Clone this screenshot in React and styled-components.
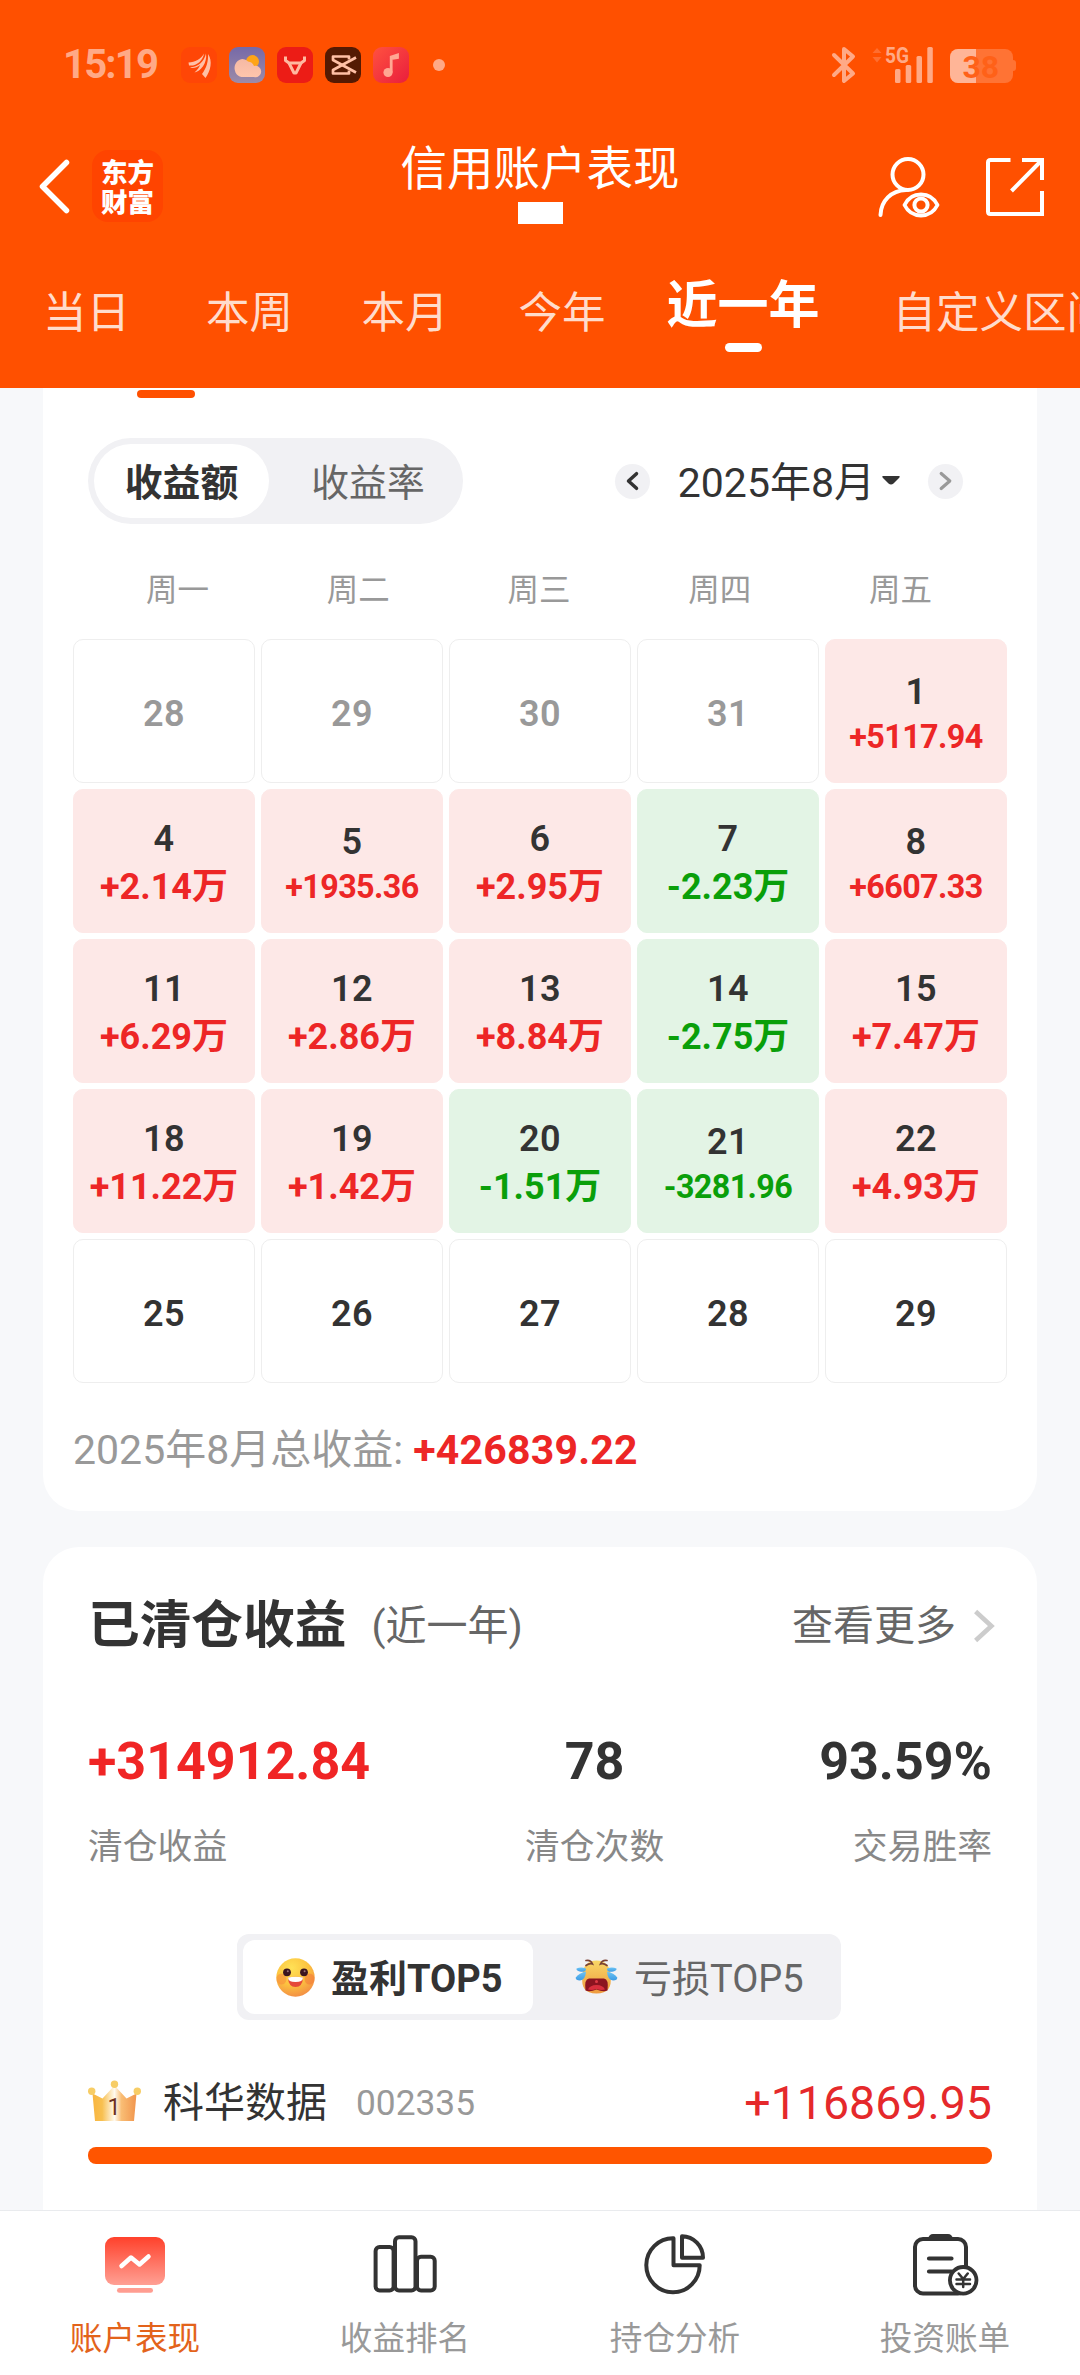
import React from "react";
import styled, { createGlobalStyle } from "styled-components";

const ORANGE = "#ff5000";
const FADED = "#ffa986";

const GlobalStyle = createGlobalStyle`
  * { box-sizing: border-box; }
  body {
    margin: 0;
    background: #f7f8fa;
    font-family: Roboto, "Noto Sans CJK SC", sans-serif;
    color: #333;
  }
  svg { display: block; flex: none; overflow: visible; }
`;

const Page = styled.div`
  width: 1080px;
  height: 2375px;
  display: flex;
  flex-direction: column;
  overflow: hidden;
  background: #f7f8fa;
`;

/* ---------- header ---------- */

const Header = styled.header`
  height: 388px;
  flex: none;
  background: ${ORANGE};
  color: #fff;
`;

const StatusBar = styled.div`
  height: 130px;
  display: flex;
  align-items: center;
  justify-content: space-between;
  padding: 0 64px 0 63px;
`;

const StatusGroup = styled.div`
  display: flex;
  align-items: center;
`;

const Clock = styled.span`
  width: 118px;
  font-size: 40px;
  font-weight: 700;
  line-height: 48px;
  letter-spacing: -1.8px;
  color: ${FADED};
`;

const AppIcons = styled.div`
  display: flex;
  gap: 12px;
`;

const MoreDot = styled.span`
  width: 12px;
  height: 12px;
  margin-left: 24px;
  border-radius: 50%;
  background: ${FADED};
`;

const SignalSlot = styled.span`
  margin: 0 14px 0 16px;
`;

const NavBar = styled.div`
  height: 112px;
  display: grid;
  grid-template-columns: 1fr auto 1fr;
  align-items: center;
  padding: 0 36px 0 36px;
`;

const NavLeft = styled.div`
  display: flex;
  align-items: center;
  gap: 21px;
  padding-left: 2px;
`;

const NavRight = styled.div`
  display: flex;
  align-items: center;
  justify-content: flex-end;
  gap: 44px;
  padding-top: 1px;
`;

const Logo = styled.div`
  width: 71px;
  height: 72px;
  padding: 6px 8px 0 9px;
  border-radius: 16px;
  background: #ff4400;
  font-family: "Noto Sans CJK SC", sans-serif;
  font-size: 26.5px;
  font-weight: 900;
  line-height: 30px;
`;

const TitleBlock = styled.div`
  display: flex;
  flex-direction: column;
  align-items: center;
  padding-bottom: 5px;
`;

const Title = styled.h1`
  margin: 0 0 8px;
  font-size: 46.5px;
  font-weight: 400;
  line-height: 50px;
`;

const MaskedAccount = styled.span`
  width: 45px;
  height: 22px;
  background: #fff;
`;

const PeriodTabs = styled.nav`
  height: 146px;
  display: flex;
  align-items: flex-start;
  padding-left: 43px;
  overflow: hidden;
`;

const PeriodTab = styled.span`
  flex: none;
  display: flex;
  flex-direction: column;
  align-items: center;
  margin-top: ${(p) => (p.$active ? 34 : 42)}px;
  margin-right: ${(p) => p.$space}px;
  font-size: ${(p) => (p.$active ? 51 : 43.5)}px;
  font-weight: ${(p) => (p.$active ? 700 : 400)};
  line-height: 60px;
  white-space: nowrap;
  color: ${(p) => (p.$active ? "#fff" : "#ffdccc")};
`;

const TabMark = styled.i`
  width: 37px;
  height: 9px;
  margin-top: 7px;
  border-radius: 5px;
  background: #fff;
`;

/* ---------- shared ---------- */

const Content = styled.main`
  flex: 1;
  min-height: 0;
  overflow: hidden;
  padding: 0 43px;
  display: flex;
  flex-direction: column;
  gap: 36px;
`;

const Card = styled.section`
  flex: none;
  background: #fff;
  padding: ${(p) => p.$padding};
  border-radius: ${(p) => p.$radius};
`;

const Row = styled.div`
  display: flex;
  align-items: center;
  justify-content: space-between;
`;

/* ---------- calendar card ---------- */

const SectionMark = styled.div`
  width: 58px;
  height: 8px;
  margin: 0 0 40px 49px;
  border-radius: 4px;
  background: ${ORANGE};
`;

const Pill = styled.div`
  display: flex;
  width: 375px;
  height: 86px;
  padding: 6px;
  border-radius: 43px;
  background: #f1f1f4;
`;

const PillOption = styled.span`
  flex: none;
  width: ${(p) => (p.$active ? 175 : 198)}px;
  padding-top: 2px;
  border-radius: 37px;
  text-align: center;
  font-size: 37.8px;
  line-height: 74px;
  font-weight: ${(p) => (p.$active ? 700 : 400)};
  color: ${(p) => (p.$active ? "#333" : "#666")};
  background: ${(p) => (p.$active ? "#fff" : "transparent")};
`;

const MonthPicker = styled.div`
  display: flex;
  align-items: center;
  margin-right: 29px;
`;

const RoundButton = styled.span`
  width: 35px;
  height: 35px;
  border-radius: 50%;
  background: #f1f1f4;
  display: flex;
  align-items: center;
  justify-content: center;
`;

const MonthLabel = styled.span`
  display: flex;
  align-items: center;
  gap: 7px;
  margin: 0 28px;
  font-size: 41px;
  line-height: 50px;
`;

const MonthText = styled.span`
  padding-top: 3px;
`;

const Weekdays = styled.div`
  display: grid;
  grid-template-columns: repeat(5, 1fr);
  margin: 47px 1px 0 -1px;
  text-align: center;
  font-size: 31.5px;
  font-weight: 400;
  line-height: 40px;
  color: #999;
`;

const Calendar = styled.div`
  display: grid;
  grid-template-columns: repeat(5, 182px);
  grid-auto-rows: 144px;
  gap: 6px;
  margin: 28px -15px 0;
`;

const tones = {
  up: { back: "#fde8e7", edge: "#fde8e7", text: "#ed2626" },
  down: { back: "#e3f4e5", edge: "#e3f4e5", text: "#0a9f0a" },
  none: { back: "#fff", edge: "#eeeeee", text: "#333" },
};

const DayCell = styled.div`
  display: flex;
  flex-direction: column;
  align-items: center;
  justify-content: center;
  padding-top: 5px;
  border-radius: 10px;
  border: 1px solid ${(p) => tones[p.$tone].edge};
  background: ${(p) => tones[p.$tone].back};
  font-weight: 700;
`;

const DayNumber = styled.span`
  font-size: 36px;
  font-weight: 600;
  line-height: 48px;
  letter-spacing: 0.4px;
  color: ${(p) => (p.$muted ? "#999" : "#333")};
`;

const DayAmount = styled.span`
  font-size: ${(p) => (p.$small ? 32.3 : 36)}px;
  line-height: ${(p) => (p.$small ? 43 : 49)}px;
  letter-spacing: ${(p) => (p.$small ? -0.6 : 0)}px;
  color: ${(p) => tones[p.$tone].text};
`;

const MonthTotal = styled.div`
  margin: 42px -15px 0;
  font-size: 41px;
  font-weight: 400;
  line-height: 50px;
  color: #999;
`;

const TotalAmount = styled.b`
  font-weight: 700;
  letter-spacing: 0.2px;
  color: #ed2626;
`;

/* ---------- closed positions card ---------- */

const CardTitle = styled.h2`
  margin: 0;
  font-size: 51.7px;
  font-weight: 700;
  line-height: 60px;
`;

const TitleNote = styled.span`
  flex: 1;
  margin-left: 25px;
  font-size: 41px;
  font-weight: 400;
  line-height: 60px;
  color: #666;
`;

const MoreLink = styled.span`
  display: flex;
  align-items: center;
  gap: 15px;
  margin-right: -4px;
  font-size: 41px;
  font-weight: 400;
  line-height: 60px;
  color: #666;
`;

const Stats = styled(Row)`
  margin-top: 76px;
`;

const Stat = styled.div`
  display: flex;
  flex-direction: column;
  align-items: ${(p) => p.$align};
`;

const StatValue = styled.span`
  font-size: 52px;
  font-weight: 700;
  line-height: 60px;
  color: ${(p) => (p.$up ? "#f02525" : "#333")};
`;

const StatLabel = styled.span`
  margin-top: 35px;
  font-size: 34.8px;
  font-weight: 400;
  line-height: 40px;
  color: #888;
`;

const RankSwitch = styled.div`
  display: flex;
  width: 604px;
  height: 86px;
  margin: 67px 0 0 149px;
  padding: 6px;
  border-radius: 12px;
  background: #f1f1f4;
`;

const RankOption = styled.span`
  width: ${(p) => (p.$active ? 290 : 302)}px;
  padding-left: ${(p) => (p.$active ? 33 : 42)}px;
  display: flex;
  align-items: center;
  gap: 16px;
  border-radius: 12px;
  font-size: 38px;
  line-height: 72px;
  font-weight: ${(p) => (p.$active ? 700 : 400)};
  color: ${(p) => (p.$active ? "#333" : "#666")};
  background: ${(p) => (p.$active ? "#fff" : "transparent")};
`;

const RankText = styled.span`
  padding-top: 3px;
`;

const StockRow = styled.div`
  display: flex;
  align-items: center;
  margin-top: 53px;
  line-height: 60px;
`;

const CrownSlot = styled.span`
  padding-bottom: 4px;
`;

const StockName = styled.span`
  margin-left: 22px;
  font-size: 41px;
`;

const StockCode = styled.span`
  flex: 1;
  margin-left: 29px;
  font-size: 35.3px;
  color: #999;
`;

const StockGain = styled.span`
  font-size: 46.5px;
  color: #e5292b;
`;

const GainBar = styled.div`
  height: 17px;
  margin-top: 14px;
  border-radius: 8px;
  background: #ff5500;
`;

/* ---------- bottom navigation ---------- */

const BottomNav = styled.nav`
  flex: none;
  height: 165px;
  display: grid;
  grid-template-columns: repeat(4, 1fr);
  border-top: 1px solid #e9ebee;
  background: #fff;
`;

const NavItem = styled.div`
  display: flex;
  flex-direction: column;
  align-items: center;
  gap: 23px;
  padding-top: 21px;
  font-size: 32.6px;
  font-weight: 400;
  line-height: 40px;
  color: ${(p) => (p.$active ? "#e3631b" : "#999")};
`;

/* ---------- drawings ---------- */

const WingIcon = () => (
  <svg width="36" height="36" viewBox="0 0 36 36">
    <rect width="36" height="36" rx="9" fill="#ff4606" />
    <g fill="#ffc0a6">
      <path d="M7.5 15.5C14 15 20 12 23 6.5C22 14 15 19.5 8 18.5Z" />
      <path d="M9 20.5C17 20 23 15 25 6.500C26.500 16 19.500 24.500 13.500 25.500C17 22 18.500 20 19 18C16 20.500 12 22 9 20.5Z" />
      <path d="M27 7C32 14 29.500 24 24.500 31L21 27C25.500 21 27.500 14 27 7Z" />
    </g>
  </svg>
);

const WeatherIcon = () => (
  <svg width="36" height="36" viewBox="0 0 36 36">
    <defs>
      <linearGradient id="sky" x1="0" y1="0" x2="0" y2="1">
        <stop offset="0" stopColor="#7569a8" />
        <stop offset="1" stopColor="#9d8ba8" />
      </linearGradient>
      <linearGradient id="cloud" x1="0" y1="0" x2="0" y2="1">
        <stop offset="0" stopColor="#f5b9a4" />
        <stop offset="1" stopColor="#ffc5ac" />
      </linearGradient>
    </defs>
    <rect width="36" height="36" rx="9" fill="url(#sky)" />
    <circle cx="23.5" cy="14.500" r="6.500" fill="#ffa417" />
    <path d="M12.500 30A8 9 0 1 1 19 14.500A7 7 0 0 1 25 19A5.700 5.700 0 1 1 25 30Z" fill="url(#cloud)" />
  </svg>
);

const BullIcon = () => (
  <svg width="36" height="36" viewBox="0 0 36 36">
    <rect width="36" height="36" rx="9" fill="#ec1c16" />
    <g fill="none" stroke="#ffb8a0" strokeWidth="3" strokeLinejoin="round">
      <path d="M8.500 9.500V13.500L12 16H24L27.500 13.500V9.500" />
      <path d="M12 16L17 26H19L24 16" />
    </g>
  </svg>
);

const CutIcon = () => (
  <svg width="36" height="36" viewBox="0 0 36 36">
    <rect width="36" height="36" rx="9" fill="#551a03" />
    <g fill="none" stroke="#ffc0a6" strokeWidth="2.700" strokeLinejoin="round">
      <path d="M31 10.500L8 23V26.500H24V23.500" />
      <path d="M31 25.500L8 13V9.500H24V12.500" />
    </g>
  </svg>
);

const MusicIcon = () => (
  <svg width="36" height="36" viewBox="0 0 36 36">
    <defs>
      <linearGradient id="music" x1="0" y1="0" x2="1" y2="1">
        <stop offset="0" stopColor="#ff5140" />
        <stop offset="1" stopColor="#e91e3c" />
      </linearGradient>
    </defs>
    <rect width="36" height="36" rx="9" fill="url(#music)" />
    <circle cx="15" cy="25.500" r="4.600" fill="#ffa793" />
    <path d="M18.200 25.500V10L24.500 8V10.500L19.500 11.500" fill="none" stroke="#ffa793" strokeWidth="2.800" />
  </svg>
);

const BluetoothIcon = () => (
  <svg width="24" height="40" viewBox="0 0 24 40">
    <path d="M2 10L21 28.500L12 36V4L21 11.500L2 30" fill="none" stroke={FADED} strokeWidth="4" strokeLinejoin="round" strokeLinecap="round" />
  </svg>
);

const SignalIcon = () => (
  <svg width="64" height="40" viewBox="0 0 64 40">
    <path d="M0.500 8L5 3L9.500 8ZM0.500 12L5 17.500L9.500 12Z" fill="#ff6e2f" />
    <text x="13" y="17.500" fontFamily="Roboto, sans-serif" fontSize="22" fontWeight="700" textLength="24" lengthAdjust="spacingAndGlyphs" fill={FADED}>5G</text>
    <g fill={FADED}>
      <rect x="23" y="24" width="5.500" height="14" rx="1.500" />
      <rect x="33.700" y="20" width="5.500" height="18" rx="1.500" />
      <rect x="44.500" y="11" width="5.500" height="27" rx="1.500" />
      <rect x="55.300" y="2" width="5.500" height="36" rx="1.500" />
    </g>
  </svg>
);

const BatteryIcon = () => (
  <svg width="66" height="40" viewBox="0 0 66 40">
    <defs>
      <clipPath id="cell"><rect y="4" width="63" height="34" rx="8" /></clipPath>
    </defs>
    <path d="M63 15a3 3 0 0 1 3 3v5a3 3 0 0 1-3 3Z" fill="#ff7334" />
    <g clipPath="url(#cell)">
      <rect y="4" width="63" height="34" fill="#ff7334" />
      <rect y="4" width="26" height="34" fill="#ffb597" />
    </g>
    <text x="12.500" y="33" fontFamily="Roboto, sans-serif" fontSize="32" fontWeight="700" fill="#ff6118">38</text>
  </svg>
);

const BackIcon = () => (
  <svg width="33" height="56" viewBox="0 0 33 56">
    <path d="M28.500 4.500L4.500 28.500L28.500 52.500" fill="none" stroke="#fff" strokeWidth="5.500" strokeLinecap="round" strokeLinejoin="round" />
  </svg>
);

const PersonViewIcon = () => (
  <svg width="64" height="64" viewBox="0 0 64 64">
    <g fill="none" stroke="#fff" strokeWidth="4" strokeLinecap="round">
      <circle cx="30" cy="19.500" r="15.500" />
      <path d="M2.500 60C3 46 13 35.500 28 35" />
      <path d="M26.500 50C30 43 36 39.500 43 39.500C50 39.500 56 43 59.500 50C56 57 50 60.500 43 60.500C36 60.500 30 57 26.500 50Z" strokeLinejoin="round" strokeWidth="3.800" />
      <circle cx="43" cy="50" r="6.600" />
    </g>
  </svg>
);

const ShareIcon = () => (
  <svg width="58" height="58" viewBox="0 0 58 58">
    <path d="M24.500 2H4.500Q2 2 2 4.500V53.500Q2 56 4.500 56H56V33" fill="none" stroke="#fff" strokeWidth="4" />
    <path d="M36 2H56V22M56 2L25.500 33" fill="none" stroke="#fff" strokeWidth="4" />
  </svg>
);

const Chevron = ({ width, height, thick, color, flip, round }) => (
  <svg width={width} height={height} viewBox={`0 0 ${width} ${height}`}>
    <path
      d={
        flip
          ? `M${width - thick} ${thick / 1.3}L${thick} ${height / 2}L${width - thick} ${height - thick / 1.3}`
          : `M${thick} ${thick / 1.3}L${width - thick} ${height / 2}L${thick} ${height - thick / 1.3}`
      }
      fill="none"
      stroke={color}
      strokeWidth={thick}
      strokeLinecap={round ? "round" : "butt"}
      strokeLinejoin={round ? "round" : "miter"}
    />
  </svg>
);

const CaretIcon = () => (
  <svg width="18" height="12" viewBox="0 0 18 12">
    <path d="M1 1H17Q18.500 1.200 17 3L11.500 8.500Q9 10.500 6.500 8.500L1 3Q-0.500 1.200 1 1Z" fill="#333" />
  </svg>
);

const HappyIcon = () => (
  <svg width="39" height="39" viewBox="0 0 39 39">
    <defs>
      <radialGradient id="happy" cx="0.4" cy="0.25" r="0.8">
        <stop offset="0" stopColor="#ffe156" />
        <stop offset="0.55" stopColor="#fcc23f" />
        <stop offset="1" stopColor="#f28a45" />
      </radialGradient>
    </defs>
    <circle cx="19.500" cy="19.500" r="19.200" fill="url(#happy)" />
    <ellipse cx="5.500" cy="21" rx="5" ry="5.500" fill="#f8893c" opacity="0.55" />
    <ellipse cx="33.500" cy="21" rx="5" ry="5.500" fill="#f2763a" opacity="0.55" />
    <circle cx="11" cy="14.300" r="3.900" fill="#3b1420" />
    <circle cx="28" cy="14.300" r="3.900" fill="#3b1420" />
    <circle cx="11.800" cy="13.300" r="1" fill="#9a7078" />
    <circle cx="28.600" cy="13.300" r="1" fill="#9a7078" />
    <path d="M12 19.500Q19.500 18 27 19.500Q26.500 29 19.500 29Q12.500 29 12 19.500Z" fill="#e5493a" />
    <path d="M12 19.500Q19.500 18 27 19.500Q27 24 19.500 24Q12 24 12 19.500Z" fill="#fff" />
  </svg>
);

const CryIcon = () => (
  <svg width="43" height="36" viewBox="0 0 43 36">
    <defs>
      <linearGradient id="cry" x1="0" y1="0" x2="0" y2="1">
        <stop offset="0" stopColor="#f9d767" />
        <stop offset="1" stopColor="#ee9a3d" />
      </linearGradient>
      <linearGradient id="tear" x1="0" y1="0" x2="0" y2="1">
        <stop offset="0" stopColor="#6ec5f5" />
        <stop offset="1" stopColor="#3d9be4" />
      </linearGradient>
    </defs>
    <path d="M7.500 18C7 7 13 1.500 21.500 1.500S36 7 35.500 18C37 28 33 34.500 21.500 34.500S6 28 7.500 18Z" fill="url(#cry)" />
    <path d="M10.500 31.500Q9 20 14 19.500H29Q34 20 32.500 31.500Q28 33.500 21.500 30.500Q15 33.500 10.500 31.500Z" fill="#8c1420" />
    <path d="M13 30.500Q15 26 21.500 26T30 30.500Q26 31.500 21.500 30Q17 31.500 13 30.500Z" fill="#d92f3d" />
    <circle cx="21.500" cy="22.500" r="1.500" fill="#dd3a45" />
    <g fill="none" stroke="#7b4336" strokeWidth="1.700" strokeLinecap="round">
      <path d="M11 1.500Q15.500 0.500 17.500 5Q14.500 4 11 6.500" />
      <path d="M32 1.500Q27.500 0.500 25.500 5Q28.500 4 32 6.500" />
    </g>
    <g fill="url(#tear)">
      <path d="M11 9.500Q11 13.500 6 12.700Q1 12 1.500 9.500Q6 7.500 11 9.500Z" />
      <path d="M11 12.500Q10.500 21 5 21.500Q0.500 21.500 0.700 18.500Q4 14 11 12.500Z" />
      <path d="M32 9.500Q32 13.500 37 12.700Q42 12 41.500 9.500Q37 7.500 32 9.500Z" />
      <path d="M32 12.500Q32.500 21 38 21.500Q42.500 21.500 42.300 18.500Q39 14 32 12.500Z" />
    </g>
  </svg>
);

const CrownIcon = () => (
  <svg width="53" height="42" viewBox="0 0 53 42">
    <defs>
      <linearGradient id="crown" x1="0" y1="0" x2="1" y2="0">
        <stop offset="0" stopColor="#f8b53f" />
        <stop offset="0.22" stopColor="#f8c050" />
        <stop offset="0.5" stopColor="#fffaf0" />
        <stop offset="0.66" stopColor="#f9bd74" />
        <stop offset="1" stopColor="#f1944c" />
      </linearGradient>
    </defs>
    <path d="M4.500 13.500L14.500 18.500L26.500 5.500L38.500 18.500L48.500 13.500L46 41H7Z" fill="url(#crown)" />
    <circle cx="3.700" cy="11.200" r="3.700" fill="#f7cd66" />
    <circle cx="26.500" cy="4.300" r="3.700" fill="#f7cd66" />
    <circle cx="49.300" cy="11.200" r="3.700" fill="#f7cd66" />
    <text x="26" y="35" textAnchor="middle" fontFamily="Roboto, sans-serif" fontSize="23.5" fontWeight="400" fill="#6d3020">1</text>
  </svg>
);

const PerformanceIcon = () => (
  <svg width="70" height="64" viewBox="0 0 70 64">
    <defs>
      <linearGradient id="screen" x1="0" y1="0" x2="0" y2="1">
        <stop offset="0" stopColor="#ff412b" />
        <stop offset="1" stopColor="#ffa094" />
      </linearGradient>
    </defs>
    <rect x="5" y="5" width="60" height="48" rx="9" fill="url(#screen)" />
    <path d="M21.500 34L31 25.500L39.500 32.500L48.500 24.500" fill="none" stroke="#fff" strokeWidth="4.500" strokeLinecap="round" strokeLinejoin="round" />
    <rect x="17" y="56" width="36" height="4.800" rx="2.400" fill="#ff9d91" />
  </svg>
);

const RankingIcon = () => (
  <svg width="70" height="64" viewBox="0 0 70 64">
    <g fill="none" stroke="#333" strokeWidth="4">
      <rect x="5.600" y="15" width="18" height="43.600" rx="4" />
      <rect x="25" y="5.200" width="20.500" height="53.400" rx="4" />
      <rect x="47" y="24.700" width="17.700" height="33.900" rx="4" />
    </g>
  </svg>
);

const PieIcon = () => (
  <svg width="70" height="64" viewBox="0 0 70 64">
    <g fill="none" stroke="#333" strokeWidth="4" strokeLinejoin="round">
      <path d="M33.500 6.300A26.700 27 0 1 0 59.700 33.300H33.500Z" />
      <path d="M42 4.200V25.700H63A21.300 21.500 0 0 0 42 4.200Z" />
    </g>
  </svg>
);

const BillIcon = () => (
  <svg width="70" height="64" viewBox="0 0 70 64">
    <path d="M18 7Q19 2 23 2H38Q42 2 43 7Z" fill="#333" />
    <rect x="5" y="7" width="51" height="54.500" rx="8" fill="none" stroke="#333" strokeWidth="4" />
    <path d="M19 26.500H41.500M19 39.500H41.500" stroke="#333" strokeWidth="4.200" strokeLinecap="round" />
    <circle cx="53.200" cy="48.300" r="13.300" fill="#fff" stroke="#333" strokeWidth="3.800" />
    <path d="M48.700 41.500L53.200 47L57.700 41.500M53.200 47V55M46.500 47.500H60M46.500 52H60" fill="none" stroke="#333" strokeWidth="2.500" strokeLinecap="round" />
  </svg>
);

/* ---------- data ---------- */

const periods = [
  { name: "当日", space: 76 },
  { name: "本周", space: 68.5 },
  { name: "本月", space: 70 },
  { name: "今年", space: 61 },
  { name: "近一年", space: 73, active: true },
  { name: "自定义区间", space: 0 },
];

const days = [
  [28, null, "none", true], [29, null, "none", true], [30, null, "none", true], [31, null, "none", true], [1, "+5117.94", "up"],
  [4, "+2.14万", "up"], [5, "+1935.36", "up"], [6, "+2.95万", "up"], [7, "-2.23万", "down"], [8, "+6607.33", "up"],
  [11, "+6.29万", "up"], [12, "+2.86万", "up"], [13, "+8.84万", "up"], [14, "-2.75万", "down"], [15, "+7.47万", "up"],
  [18, "+11.22万", "up"], [19, "+1.42万", "up"], [20, "-1.51万", "down"], [21, "-3281.96", "down"], [22, "+4.93万", "up"],
  [25, null, "none"], [26, null, "none"], [27, null, "none"], [28, null, "none"], [29, null, "none"],
];

const navItems = [
  { name: "账户表现", Icon: PerformanceIcon, active: true },
  { name: "收益排名", Icon: RankingIcon },
  { name: "持仓分析", Icon: PieIcon },
  { name: "投资账单", Icon: BillIcon },
];

/* ---------- sections ---------- */

const TopHeader = () => (
  <Header>
    <StatusBar>
      <StatusGroup>
        <Clock>15:19</Clock>
        <AppIcons>
          <WingIcon />
          <WeatherIcon />
          <BullIcon />
          <CutIcon />
          <MusicIcon />
        </AppIcons>
        <MoreDot />
      </StatusGroup>
      <StatusGroup>
        <BluetoothIcon />
        <SignalSlot><SignalIcon /></SignalSlot>
        <BatteryIcon />
      </StatusGroup>
    </StatusBar>
    <NavBar>
      <NavLeft>
        <BackIcon />
        <Logo>东方财富</Logo>
      </NavLeft>
      <TitleBlock>
        <Title>信用账户表现</Title>
        <MaskedAccount />
      </TitleBlock>
      <NavRight>
        <PersonViewIcon />
        <ShareIcon />
      </NavRight>
    </NavBar>
    <PeriodTabs>
      {periods.map((p) => (
        <PeriodTab key={p.name} $active={p.active} $space={p.space}>
          {p.name}
          {p.active && <TabMark />}
        </PeriodTab>
      ))}
    </PeriodTabs>
  </Header>
);

const CalendarCard = () => (
  <Card $padding="2px 45px 36px" $radius="0 0 36px 36px">
    <SectionMark />
    <Row>
      <Pill>
        <PillOption $active>收益额</PillOption>
        <PillOption>收益率</PillOption>
      </Pill>
      <MonthPicker>
        <RoundButton><Chevron width={15} height={20} thick={3.5} color="#333" flip round /></RoundButton>
        <MonthLabel>
          <MonthText>2025年8月</MonthText>
          <CaretIcon />
        </MonthLabel>
        <RoundButton><Chevron width={15} height={20} thick={3.2} color="#999" round /></RoundButton>
      </MonthPicker>
    </Row>
    <Weekdays>
      {["周一", "周二", "周三", "周四", "周五"].map((d) => <span key={d}>{d}</span>)}
    </Weekdays>
    <Calendar>
      {days.map(([day, amount, tone, muted], i) => (
        <DayCell key={i} $tone={tone}>
          <DayNumber $muted={muted}>{day}</DayNumber>
          {amount && <DayAmount $tone={tone} $small={!amount.includes("万")}>{amount}</DayAmount>}
        </DayCell>
      ))}
    </Calendar>
    <MonthTotal>2025年8月总收益: <TotalAmount>+426839.22</TotalAmount></MonthTotal>
  </Card>
);

const ClosedCard = () => (
  <Card $padding="49px 45px 90px" $radius="36px 36px 0 0">
    <Row>
      <CardTitle>已清仓收益</CardTitle>
      <TitleNote>(近一年)</TitleNote>
      <MoreLink>
        查看更多
        <Chevron width={25} height={36} thick={4.6} color="#ccc" />
      </MoreLink>
    </Row>
    <Stats>
      <Stat $align="flex-start">
        <StatValue $up>+314912.84</StatValue>
        <StatLabel>清仓收益</StatLabel>
      </Stat>
      <Stat $align="center">
        <StatValue>78</StatValue>
        <StatLabel>清仓次数</StatLabel>
      </Stat>
      <Stat $align="flex-end">
        <StatValue>93.59%</StatValue>
        <StatLabel>交易胜率</StatLabel>
      </Stat>
    </Stats>
    <RankSwitch>
      <RankOption $active><HappyIcon /><RankText>盈利TOP5</RankText></RankOption>
      <RankOption><CryIcon /><RankText>亏损TOP5</RankText></RankOption>
    </RankSwitch>
    <StockRow>
      <CrownSlot><CrownIcon /></CrownSlot>
      <StockName>科华数据</StockName>
      <StockCode>002335</StockCode>
      <StockGain>+116869.95</StockGain>
    </StockRow>
    <GainBar />
  </Card>
);

export default function App() {
  return (
    <Page>
      <GlobalStyle />
      <TopHeader />
      <Content>
        <CalendarCard />
        <ClosedCard />
      </Content>
      <BottomNav>
        {navItems.map(({ name, Icon, active }) => (
          <NavItem key={name} $active={active}>
            <Icon />
            <span>{name}</span>
          </NavItem>
        ))}
      </BottomNav>
    </Page>
  );
}
